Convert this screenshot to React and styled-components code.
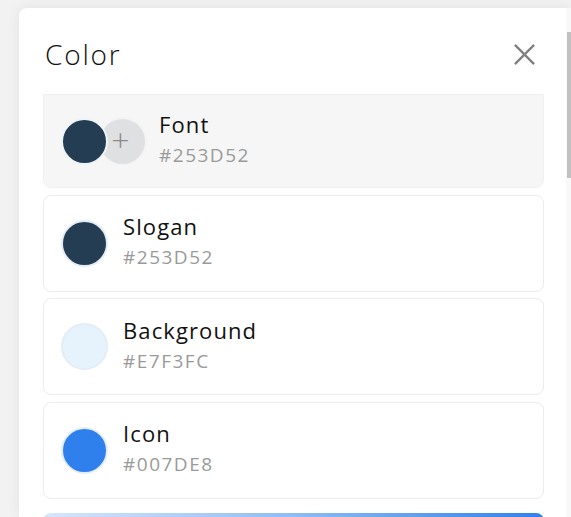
import React from 'react';
import styled, { createGlobalStyle, css } from 'styled-components';

const GlobalStyle = createGlobalStyle`
    html, body {
        margin: 0;
        padding: 0;
        height: 100%;
        overflow: hidden;
        background: #f2f2f2;
        font-family: "Open Sans", "Noto Sans", Arial, sans-serif;
    }
`;

const colors = [
    { name: 'Slogan', hex: '#253D52', swatch: '#253D52' },
    { name: 'Background', hex: '#E7F3FC', swatch: '#E7F3FC' },
    { name: 'Icon', hex: '#007DE8', swatch: '#2F80EC' },
];

export default function App() {
    return (
        <>
            <GlobalStyle />
            <Panel>
                <Content>
                    <Header>
                        <Title>Color</Title>
                        <CloseButton aria-label="Close">
                            <svg width="24" height="24" viewBox="0 0 24 24">
                                <path d="M2 2 L22 22 M22 2 L2 22" stroke="#808080" strokeWidth="2.4" fill="none" />
                            </svg>
                        </CloseButton>
                    </Header>
                    <List>
                        <Card active short>
                            <Swatches>
                                <Swatch color="#253D52" front />
                                <AddSwatch>+</AddSwatch>
                            </Swatches>
                            <Info>
                                <Name>Font</Name>
                                <Hex>#253D52</Hex>
                            </Info>
                        </Card>
                        {colors.map(c => (
                            <Card key={c.name}>
                                <Swatch color={c.swatch} />
                                <Info>
                                    <Name>{c.name}</Name>
                                    <Hex>{c.hex}</Hex>
                                </Info>
                            </Card>
                        ))}
                        <GradientCard />
                    </List>
                </Content>
                <ScrollTrack>
                    <ScrollThumb />
                </ScrollTrack>
            </Panel>
        </>
    );
}

const Panel = styled.div`
    margin: 8px 0 0 19px;
    height: 509px;
    display: flex;
    background: #fff;
    border-top-left-radius: 8px;
    box-shadow: 0 0 14px rgba(0, 0, 0, 0.07);
    overflow: hidden;
`;

const Content = styled.div`
    flex: 1;
    display: flex;
    flex-direction: column;
`;

const Header = styled.div`
    display: flex;
    align-items: center;
    justify-content: space-between;
    padding: 32px 30px 26px 26px;
`;

const Title = styled.h2`
    margin: 0;
    font-size: 28px;
    line-height: 28px;
    font-weight: 300;
    letter-spacing: 1.8px;
    color: #111;
`;

const CloseButton = styled.button`
    border: none;
    background: none;
    padding: 0;
    width: 23px;
    height: 23px;
    display: flex;
    cursor: pointer;

    svg {
        width: 23px;
        height: 23px;
    }
`;

const List = styled.div`
    display: flex;
    flex-direction: column;
    gap: 6.5px;
    padding: 0 22px 0 24px;
`;

const Card = styled.div`
    height: 97px;
    box-sizing: border-box;
    display: flex;
    align-items: center;
    gap: 15px;
    padding-left: 17px;
    border: 1px solid #ececec;
    border-radius: 8px;
    background: #fff;

    ${props => props.active && css`
        background: #f6f6f6;
        border-color: #f0f0f0;
        gap: 12px;
    `}

    ${props => props.short && css`
        height: 94px;
        border-top-left-radius: 0;
        border-top-right-radius: 0;
    `}
`;

const GradientCard = styled.div`
    margin-top: 8px;
    height: 97px;
    border-radius: 8px;
    background: linear-gradient(90deg, #d6e7fb 0%, #8ebcf4 50%, #2f80ed 100%);
`;

const Swatches = styled.div`
    display: flex;
    align-items: center;
`;

const Swatch = styled.div`
    width: 47px;
    height: 47px;
    box-sizing: border-box;
    border-radius: 50%;
    background: ${props => props.color};
    border: 2px solid #e4edf6;
    flex-shrink: 0;

    ${props => props.front && css`
        position: relative;
        z-index: 1;
        border-color: #eef3f8;
    `}
`;

const AddSwatch = styled.div`
    width: 49px;
    height: 49px;
    box-sizing: border-box;
    margin-left: -10px;
    border-radius: 50%;
    background: #dfe0e2;
    border: 2px solid #f4f4f4;
    display: flex;
    align-items: center;
    justify-content: center;
    padding: 0 4px 2px 0;
    color: #8a8a8a;
    font-size: 32px;
    font-weight: 300;
    line-height: 1;
`;

const Info = styled.div`
    display: flex;
    flex-direction: column;
    padding-bottom: 4px;
`;

const Name = styled.div`
    font-size: 22px;
    line-height: 26px;
    color: #111;
    letter-spacing: 1.1px;
`;

const Hex = styled.div`
    margin-top: 6px;
    font-size: 19px;
    line-height: 24px;
    color: #9a9a9a;
    letter-spacing: 1.5px;
`;

const ScrollTrack = styled.div`
    width: 5px;
    padding-top: 24px;
    background: #f8f8f8;
    display: flex;
    flex-direction: column;
    align-items: flex-end;
`;

const ScrollThumb = styled.div`
    width: 4px;
    height: 146px;
    background: #c1c1c1;
`;
